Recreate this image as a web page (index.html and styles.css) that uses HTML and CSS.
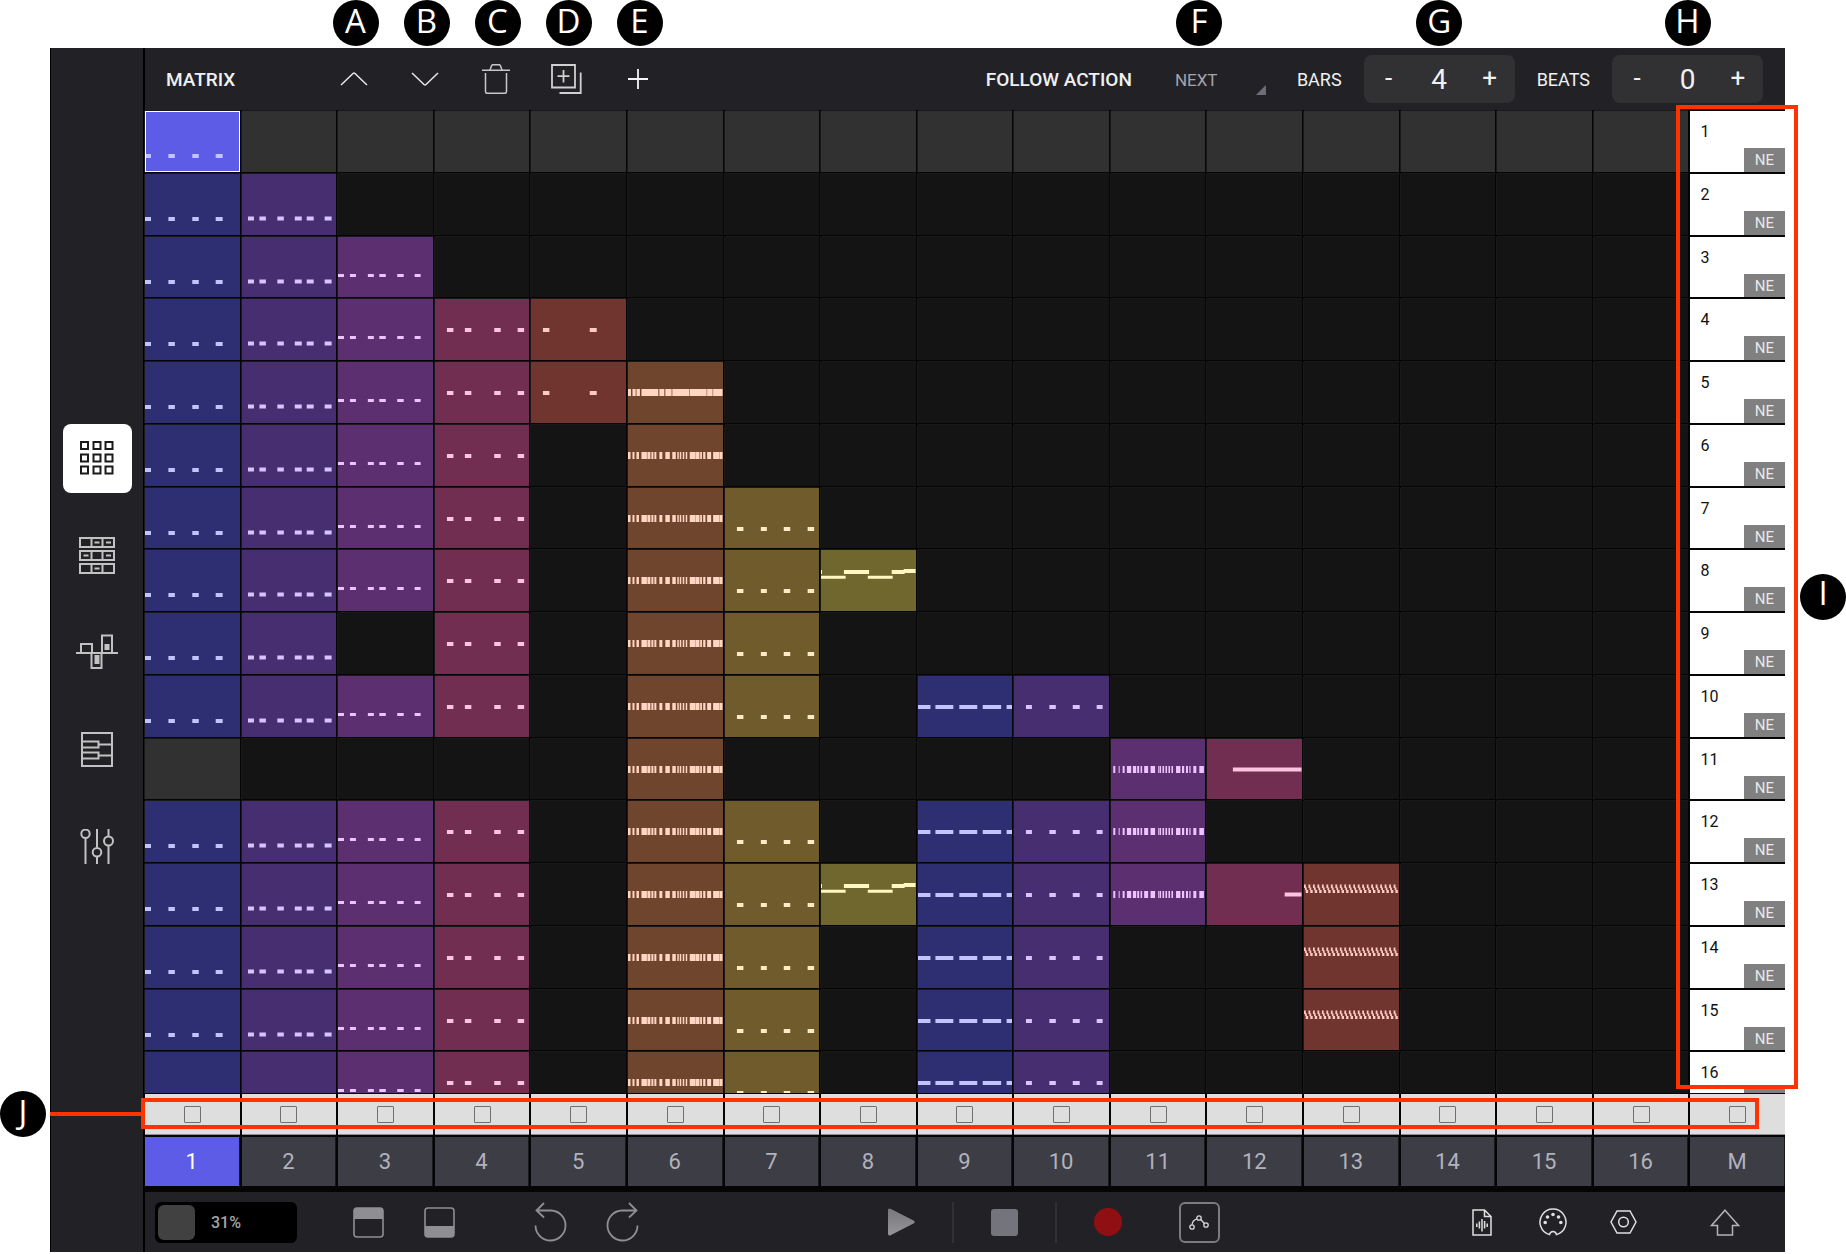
FILE: index.html
```
<!DOCTYPE html>
<html lang="en">
<head>
<meta charset="utf-8">
<title>Matrix</title>
<link rel="stylesheet" href="styles.css">
</head>
<body>
<div class="app">
  <nav class="sidebar" aria-label="Views">
    <button class="view view-active" aria-label="Matrix view">
      <svg width="34" height="34" viewBox="0 0 34 34" fill="none" stroke="#1a1a1a" stroke-width="2"><path d="M1 1h7v7H1zM13.500 1h7v7h-7zM25.500 1h7v7h-7zM1 13.500h7v7H1zM13.500 13.500h7v7h-7zM25.500 13.500h7v7h-7zM1 25.500h7v7H1zM13.500 25.500h7v7h-7zM25.500 25.500h7v7h-7z"/></svg>
    </button>
    <button class="view" aria-label="Arrangement view">
      <svg width="36" height="37" viewBox="0 0 36 37" fill="none" stroke="#c2c2c2" stroke-width="2"><path d="M1 1h34v9H1zM12.500 1v9M23.500 1v9M1 14h34v9H1zM12.500 14v9M23.500 14v9M1 27h34v9H1zM12.500 27v9M23.500 27v9M15.500 5.500h5M27 5.500h5M4.500 18.500h5M27 18.500h5M15.500 31.500h5"/></svg>
    </button>
    <button class="view" aria-label="Modulation view">
      <svg width="42" height="36" viewBox="0 0 42 36" fill="none" stroke="#c2c2c2" stroke-width="2"><path d="M0 19h42M5 19v-9h11v9M15.500 19v15h10V19M26 19V1.500h10V19"/><path d="M18.500 21h5v9h-5zM28.500 10h5v6h-5z" fill="#c2c2c2" stroke="none"/></svg>
    </button>
    <button class="view" aria-label="Piano roll view">
      <svg width="32" height="35" viewBox="0 0 32 35" fill="none" stroke="#c2c2c2" stroke-width="2"><path d="M1 1h30v33H1zM1 9.500h16.500v6H1M17.500 12.500H31M1 20.500h16.500v6H1M17.500 23.500H31"/></svg>
    </button>
    <button class="view" aria-label="Mixer view">
      <svg width="34" height="35" viewBox="0 0 34 35" fill="none" stroke="#c2c2c2" stroke-width="2"><path d="M5.500 9.500V35M17 0v18.500M17 28v7M28.500 0v7M28.500 17v18"/><circle cx="5.500" cy="4.800" r="4.200"/><circle cx="17" cy="23.200" r="4.300"/><circle cx="28.500" cy="12" r="4.500"/></svg>
    </button>
  </nav>

  <main class="main">
    <header class="topbar">
      <h1 class="title">MATRIX</h1>
      <div class="tool"><button class="icon-btn" aria-label="Move up"><svg width="28" height="14" viewBox="0 0 28 14" fill="none" stroke="#e8e8e8" stroke-width="1.500"><path d="M1 13L13 1.500q1-1 2 0L27 13"/></svg></button><span class="callout">A</span></div>
      <div class="tool"><button class="icon-btn" aria-label="Move down"><svg width="28" height="14" viewBox="0 0 28 14" fill="none" stroke="#e8e8e8" stroke-width="1.500"><path d="M1 1l12 11.500q1 1 2 0L27 1"/></svg></button><span class="callout">B</span></div>
      <div class="tool"><button class="icon-btn" aria-label="Delete"><svg width="28" height="30" viewBox="0 0 28 30" fill="none" stroke="#c8c8c8" stroke-width="1.500"><path d="M0 6.200h28M8 6l1.500-4.200q.5-1 1.500-1h6q1 0 1.500 1L20 6M3.500 9v18.500q0 1.800 1.800 1.800h17.400q1.800 0 1.800-1.800V9"/></svg></button><span class="callout">C</span></div>
      <div class="tool"><button class="icon-btn" aria-label="Duplicate"><svg width="31" height="30" viewBox="0 0 31 30" fill="none" stroke="#d0d0d0" stroke-width="1.800"><path d="M1 1h23v22.500H1zM12.500 6v12.500M6.500 12.200h12M29.700 8.500v20.500H8.500"/></svg></button><span class="callout">D</span></div>
      <div class="tool"><button class="icon-btn" aria-label="Add"><svg width="20" height="20" viewBox="0 0 20 20" fill="none" stroke="#f4f4f4" stroke-width="1.800"><path d="M10 0v20M0 10h20"/></svg></button><span class="callout">E</span></div>

      <label class="bar-label follow-label" for="follow">FOLLOW ACTION</label>
      <div class="select-wrap">
        <select id="follow" class="select"><option>NEXT</option></select>
        <span class="select-mark"></span>
        <span class="callout">F</span>
      </div>
      <label class="bar-label" for="bars">BARS</label>
      <div class="step-wrap">
        <div class="stepper"><button class="step" aria-label="Fewer bars">-</button><input class="value" id="bars" value="4"><button class="step" aria-label="More bars">+</button></div>
        <span class="callout">G</span>
      </div>
      <label class="bar-label" for="beats">BEATS</label>
      <div class="step-wrap">
        <div class="stepper"><button class="step" aria-label="Fewer beats">-</button><input class="value" id="beats" value="0"><button class="step" aria-label="More beats">+</button></div>
        <span class="callout">H</span>
      </div>
    </header>

    <section class="matrix" id="matrix" aria-label="Patterns">
      <div class="scene-outline"><span class="callout">I</span></div>
    </section>

    <section class="mutes" id="mutes" aria-label="Mutes">
      <div class="mute-outline"><span class="connector"></span><span class="callout">J</span></div>
    </section>

    <section class="tracks" id="tracks" aria-label="Tracks"></section>

    <footer class="transport">
      <div class="group group-left">
        <div class="meter"><span class="meter-knob"></span><span class="meter-text">31%</span></div>
        <button class="icon-btn" aria-label="Top panel"><svg width="31" height="31" viewBox="0 0 31 31"><rect x="1" y="1" width="29" height="29" rx="3" fill="none" stroke="#8e8e93" stroke-width="1.600"/><path d="M1 12V4q0-3 3-3h23q3 0 3 3v8z" fill="#8e8e93"/></svg></button>
        <button class="icon-btn" aria-label="Bottom panel"><svg width="31" height="31" viewBox="0 0 31 31"><rect x="1" y="1" width="29" height="29" rx="3" fill="none" stroke="#8e8e93" stroke-width="1.600"/><path d="M1 19v8q0 3 3 3h23q3 0 3-3v-8z" fill="#8e8e93"/></svg></button>
        <button class="icon-btn undo" aria-label="Undo"><svg width="34" height="40" viewBox="0 0 34 40" fill="none" stroke="#8e8e93" stroke-width="1.800"><path d="M10 1L2.500 8.500 10 15.500M2.500 8.500H17a15 15 0 1 1-15.500 15"/></svg></button>
        <button class="icon-btn" aria-label="Redo"><svg width="34" height="40" viewBox="0 0 34 40" fill="none" stroke="#8e8e93" stroke-width="1.800"><path d="M24 1l7.500 7.500L24 15.500M31.500 8.500H17a15 15 0 1 0 15.500 15"/></svg></button>
      </div>
      <div class="group group-mid">
        <button class="plain" aria-label="Play"><svg width="27" height="28" viewBox="0 0 27 28"><defs><linearGradient id="pg" x2="0" y2="1"><stop offset="0" stop-color="#77777c"/><stop offset="1" stop-color="#95959a"/></linearGradient></defs><path d="M0 2.500Q0-.5 3 1l22.500 11.500q2.500 1.500 0 3L3 27Q0 28.500 0 25.500z" fill="url(#pg)"/></svg></button>
        <span class="divider"></span>
        <button class="plain stop" aria-label="Stop"></button>
        <span class="divider"></span>
        <button class="plain record" aria-label="Record"></button>
        <button class="plain automation" aria-label="Automation"><svg width="20" height="15" viewBox="0 0 20 15" fill="none" stroke="#d6d6d6" stroke-width="1.300"><circle cx="3" cy="12" r="2.200"/><circle cx="10" cy="3" r="2.200"/><circle cx="17" cy="10" r="2.200"/><path d="M3 9.800Q3.500 5 8 3.800M11.800 4.500L15.400 8.500"/></svg></button>
      </div>
      <div class="group group-right">
        <button class="icon-btn" aria-label="Audio file"><svg width="20" height="27" viewBox="0 0 20 27" fill="none" stroke="#e0e0e0" stroke-width="1.500"><path d="M1 1h11.500L19 7.500V26H1zM12.500 1v6.500H19M4.800 14.500v3.500M7.400 12.500v7M10 10v12.500M12.600 12v7.500M15.200 14.500v3.500"/></svg></button>
        <button class="icon-btn" aria-label="MIDI"><svg width="28" height="28" viewBox="0 0 28 28" fill="none" stroke="#e0e0e0" stroke-width="1.500"><path d="M10.500 26.600A13 13 0 1 1 17.500 26.600Q16.800 23.500 14 23.500T10.500 26.600z"/><g fill="#e0e0e0" stroke="none"><circle cx="6.200" cy="14.500" r="1.800"/><circle cx="8.500" cy="9" r="1.800"/><circle cx="14" cy="6.500" r="1.800"/><circle cx="19.500" cy="9" r="1.800"/><circle cx="21.800" cy="14.500" r="1.800"/></g></svg></button>
        <button class="icon-btn" aria-label="Settings"><svg width="27" height="24" viewBox="0 0 27 24" fill="none" stroke="#e0e0e0" stroke-width="1.500"><path d="M7 1h13l6 11-6 11H7L1 12z"/><circle cx="13.500" cy="12" r="4.800"/></svg></button>
        <button class="icon-btn shift" aria-label="Shift"><svg width="30" height="27" viewBox="0 0 30 27" fill="none" stroke="#b4b4b4" stroke-width="1.500"><path d="M15 1.200L28.500 16.500H22.500V26H7.500V16.500H1.500z"/></svg></button>
      </div>
    </footer>
  </main>
</div>
<script src="matrix.js"></script>
</body>
</html>
```
FILE: matrix.js
```
// Each note is [x, width] on a line, or [x, width, y, height]; a clip is 95 by 61 units.
const line = (y, h, notes) => notes.map(([x, w]) => [x, w, y, h]);
const kick = line(43, 4, [[0, 6], [23.5, 6.5], [47.5, 6.5], [71, 7]]);
const snare = line(42.5, 4, [[6, 6], [17.5, 6.5], [35.5, 6.5], [53, 7], [65, 7], [83, 7]]);
const hat = line(37, 3, [[0, 6], [12, 6], [30, 6], [41.5, 6.5], [59.5, 6.5], [77, 6]]);
const clap = line(29, 4, [[12, 6.5], [30, 6.5], [59.5, 6.5], [83, 6.5]]);
const tom = line(29, 4, [[12, 6.5], [59, 7]]);
const roll = line(27, 7, [[0, 2.5], [4.5, 2], [8.5, 2.5], [13.5, 5.5], [19.5, 3], [23.5, 2], [26.5, 2], [31.5, 3], [37.5, 4.5], [44.5, 3.5], [49.5, 1.5], [52, 1.5], [55, 1.5], [58, 1.5], [62, 6], [68.3, 3.5], [72.5, 1.8], [75.5, 2.3], [79.5, 4], [85.5, 6], [91.8, 3.2]]);
const rollLong = line(27, 7, [[0, 3], [4.5, 3.2], [8.5, 3.5], [13.5, 17], [31.5, 5], [37.5, 6.3], [44.5, 17], [62, 17], [79.5, 5.5], [85.5, 9.5]]);
const perc = line(39, 4, [[12, 6.5], [36, 6], [59, 6.5], [83, 6.5]]);
const lead = [[0, 1, 20, 4], [0, 24.7, 25.7, 3], [23, 25.3, 20, 4], [47, 25, 25.7, 3], [71, 13, 20, 4], [83, 12, 19, 4]];
const pad = line(29, 4, [[0, 12.5], [17.5, 18], [41.5, 18], [65, 18.5], [89, 6]]);
const four = line(29, 4, [[12, 6], [35.5, 6.5], [59, 7], [83, 6]]);
const shaker = line(27, 7, [[2.3, 2], [7.7, 1], [11.7, 2], [16, 4.3], [22, 3.3], [26.3, 2], [29.7, 1.6], [33.3, 4], [39.7, 4.6], [47.3, .8], [48.7, 1.6], [51.7, 1.6], [54.7, 1.6], [57.7, 1.6], [60.7, 1.6], [65.3, 4.4], [71.3, 2.2], [75.3, 2], [78.7, 1.2], [82.7, 3], [88.7, 4.6]]);
const drone = line(28.5, 4, [[26, 69]]);
const droneEnd = line(28.5, 4, [[78, 17]]);
const arp = [];
for (let i = 0; i < 21; i++) {
  const x = i * 4.5;
  arp.push([x, 1.8, 20.5, 3.5], [x + 1, 1.8, 23.5, 2.5], [x + 1.8, 2.4, 26, 3]);
}

const tracks = [
  { rows: [1, 2, 3, 4, 5, 6, 7, 8, 9, 10, 12, 13, 14, 15, 16], clip: kick },
  { rows: [2, 3, 4, 5, 6, 7, 8, 9, 10, 12, 13, 14, 15, 16], clip: snare },
  { rows: [3, 4, 5, 6, 7, 8, 10, 12, 13, 14, 15, 16], clip: hat },
  { rows: [4, 5, 6, 7, 8, 9, 10, 12, 13, 14, 15, 16], clip: clap },
  { rows: [4, 5], clip: tom },
  { rows: [5, 6, 7, 8, 9, 10, 11, 12, 13, 14, 15, 16], clip: roll, special: { 5: rollLong } },
  { rows: [7, 8, 9, 10, 12, 13, 14, 15, 16], clip: perc },
  { rows: [8, 13], clip: lead },
  { rows: [10, 12, 13, 14, 15, 16], clip: pad },
  { rows: [10, 12, 13, 14, 15, 16], clip: four },
  { rows: [11, 12, 13], clip: shaker },
  { rows: [11, 13], clip: drone, special: { 13: droneEnd } },
  { rows: [13, 14, 15], clip: arp },
  { rows: [] }, { rows: [] }, { rows: [] }
];

function drawing(notes) {
  const d = notes.map(([x, w, y, h]) => `M${x} ${y}h${w}v${h}h-${w}z`).join('');
  return `<svg class="notes" viewBox="0 0 95 61" preserveAspectRatio="none"><path d="${d}"/></svg>`;
}

let cells = '';
for (let row = 1; row <= 16; row++) {
  tracks.forEach((track, i) => {
    const filled = track.rows.includes(row);
    let name = 'cell';
    if (filled) name += ` hue-${i % 8 + 1}`;
    if (row === 1 || (row === 11 && i === 0)) name += ' lit';
    if (row === 1 && i === 0) name += ' selected';
    const clip = filled ? drawing((track.special && track.special[row]) || track.clip) : '';
    cells += `<button class="${name}" aria-label="Pattern ${row}, track ${i + 1}">${clip}</button>`;
  });
  const action = row < 16 ? '<span class="scene-action">NE</span>' : '<span class="scene-action"></span>';
  cells += `<button class="scene"><span class="scene-no">${row}</span>${action}</button>`;
}
document.getElementById('matrix').insertAdjacentHTML('afterbegin', cells);

let mutes = '';
let heads = '';
for (let i = 1; i <= 17; i++) {
  const name = i === 17 ? 'M' : i;
  mutes += `<label class="mute"><input class="box" type="checkbox" aria-label="Mute ${name}"></label>`;
  heads += `<button class="track${i === 1 ? ' track-active' : ''}">${name}</button>`;
}
document.getElementById('mutes').insertAdjacentHTML('afterbegin', mutes);
document.getElementById('tracks').innerHTML = heads;
```
FILE: styles.css
```
* { box-sizing: border-box; }

body {
  margin: 0;
  padding: 48px 61px 2px 50px;
  height: 100vh;
  display: flex;
  background: #fff;
  font-family: Roboto, "Liberation Sans", sans-serif;
  overflow-x: hidden;
}

button, input, select {
  margin: 0;
  padding: 0;
  border: 0;
  background: none;
  color: inherit;
  font: inherit;
}

svg { display: block; }

.app { flex: 1; display: flex; min-width: 0; background: #050505; }

.sidebar {
  width: 95px;
  display: flex;
  flex-direction: column;
  align-items: center;
  justify-content: center;
  gap: 28px;
  padding-top: 4px;
  background: #222226;
  border-left: 1px solid #000;
  border-right: 2px solid #000;
}

.view {
  width: 69px;
  height: 69px;
  display: flex;
  align-items: center;
  justify-content: center;
  border-radius: 8px;
}

.view-active { background: #fff; }

.main { flex: 1; min-width: 0; display: flex; flex-direction: column; }

/* top bar */
.topbar {
  flex: none;
  height: 62px;
  margin-bottom: 1px;
  padding: 0 22px 0 21px;
  display: flex;
  align-items: center;
  background: #222226;
  color: #f0f0f0;
}

.title { width: 152px; margin: 0; padding-top: 2px; font-size: 19px; font-weight: 500; line-height: 24px; }

.tool, .step-wrap, .select-wrap {
  position: relative;
  align-self: stretch;
  display: flex;
  align-items: center;
}

.icon-btn {
  width: 71px;
  height: 60px;
  display: flex;
  align-items: center;
  justify-content: center;
}

.bar-label { margin-right: 22px; padding-top: 2px; font-size: 18px; line-height: 24px; }

.follow-label { margin-left: auto; margin-right: 43px; font-size: 19px; font-weight: 500; }

.select-wrap { margin-right: 31px; }

.select {
  width: 91px;
  height: 32px;
  padding-top: 2px;
  appearance: none;
  color: #a4a4aa;
  font-size: 17px;
}

.select-mark {
  position: absolute;
  right: 0;
  bottom: 15px;
  width: 10px;
  height: 10px;
  background: #6e6e76;
  clip-path: polygon(100% 0, 100% 100%, 0 100%);
}

.step-wrap { margin-right: 22px; }
.step-wrap:last-child { margin-right: 0; }

.stepper {
  width: 151px;
  height: 48px;
  display: flex;
  align-items: center;
  background: #313133;
  border-radius: 8px;
}

.step { width: 50px; height: 48px; padding-bottom: 2px; font-size: 26px; line-height: 32px; }

.value { flex: 1; min-width: 0; height: 48px; text-align: center; font-size: 28px; }

/* lettered callouts */
.callout {
  position: absolute;
  z-index: 3;
  width: 46px;
  height: 46px;
  border-radius: 50%;
  background: #000;
  color: #fff;
  font: 33px/42px "Open Sans", sans-serif;
  text-align: center;
}

.tool .callout { bottom: calc(100% + 2px); left: calc(50% - 21px); }
.step-wrap .callout { bottom: calc(100% + 2px); left: calc(50% - 23px); }
.select-wrap .callout { bottom: calc(100% + 2px); left: 1px; }
.scene-outline .callout { left: calc(100% + 6px); top: calc(50% - 23px); line-height: 38px; }
.mute-outline .callout { left: -145px; top: calc(50% - 23px); }

/* pattern grid */
.matrix {
  position: relative;
  flex: 1 1 0;
  min-height: 0;
  display: grid;
  grid-template-columns: repeat(17, minmax(0, 1fr));
  grid-template-rows: repeat(15, minmax(0, 3fr)) minmax(0, 2fr);
  gap: 2px;
  background: #050505;
}

.cell {
  display: flex;
  align-items: flex-start;
  overflow: hidden;
  background: #141414;
  box-shadow: -1px 0 #191919, 0 -1px #191919;
}

.notes { width: 100%; height: 61px; flex: none; fill: currentColor; }

.lit { background: #313131; }

.hue-1 { background: #2d2f72; color: #c3c4ff; }
.hue-2 { background: #462e71; color: #d8c4ff; }
.hue-3 { background: #5c2f71; color: #edc4ff; }
.hue-4 { background: #712e50; color: #ffc4e1; }
.hue-5 { background: #70352f; color: #ffcbc4; }
.hue-6 { background: #70452d; color: #ffd6c2; }
.hue-7 { background: #705b2d; color: #ffecc2; }
.hue-8 { background: #70672f; color: #fff8c2; }

.selected { background: #5c5ce6; outline: 1px solid #fff; outline-offset: -1px; }

.scene {
  display: flex;
  flex-direction: column;
  justify-content: flex-start;
  overflow: hidden;
  background: #fff;
  color: #111;
  font-size: 16px;
  text-align: left;
}

.scene-no { flex: none; align-self: flex-start; height: 37px; padding: 9px 0 0 10px; line-height: 24px; }

.scene-action {
  flex: none;
  align-self: flex-end;
  width: 41px;
  height: 24px;
  background: #808080;
  color: #e8e8e8;
  font-size: 15px;
  line-height: 25px;
  text-align: center;
}

.scene-outline {
  position: absolute;
  z-index: 2;
  grid-column: 17;
  grid-row: 1 / -1;
  inset: -6px -13px 4px -14px;
  border: 4px solid #ff3300;
}

/* mutes */
.mutes, .tracks {
  flex: none;
  display: grid;
  grid-template-columns: repeat(17, minmax(0, 1fr));
  column-gap: 2px;
}

.mutes { position: relative; height: 44px; padding: 1px 0 2px; }

.mute {
  display: flex;
  align-items: center;
  justify-content: center;
  background: #dedede;
  border-bottom: 1px solid #909090;
}

.box { appearance: none; width: 17px; height: 17px; border: 1px solid #707070; border-radius: 1px; }
.box:checked { background: #707070; }

.mute-outline {
  position: absolute;
  inset: 5px 26px 8px -4px;
  border: 4px solid #ff3300;
  pointer-events: none;
}

.connector {
  position: absolute;
  left: -95px;
  top: calc(50% - 2px);
  width: 95px;
  height: 4px;
  background: #ff3300;
}

/* track heads */
.tracks { height: 49px; margin-bottom: 6px; }

.track {
  background: #3d3d46;
  border-right: 1px solid #19191c;
  color: #b2b2bc;
  font-size: 22px;
}

.track-active { background: #5c5ce6; color: #fff; }

/* transport */
.transport {
  flex: none;
  height: 60px;
  padding: 0 25px 0 10px;
  display: flex;
  align-items: center;
  justify-content: space-between;
  background: #222226;
}

.group { display: flex; align-items: center; }
.group-left { padding-right: 4px; }
.group-mid { gap: 37px; }

.meter {
  width: 142px;
  height: 41px;
  margin-right: 36px;
  padding: 3px;
  display: flex;
  align-items: center;
  gap: 16px;
  background: #000;
  border-radius: 6px;
}

.meter-knob { width: 37px; height: 35px; background: #414141; border-radius: 6px; }
.meter-text { color: #a6a6a6; font-size: 16px; font-weight: 500; }

.undo { margin-left: 40px; }
.shift { margin-left: 30px; }

.divider { width: 2px; height: 41px; background: #303036; }

.stop { width: 27px; height: 27px; border-radius: 3px; background: #74747c; }
.record { width: 28px; height: 28px; border-radius: 50%; background: #8f0f13; }

.automation {
  width: 41px;
  height: 41px;
  margin-left: 20px;
  display: flex;
  align-items: center;
  justify-content: center;
  border: 2px solid #7c7c7c;
  border-radius: 6px;
}
```
